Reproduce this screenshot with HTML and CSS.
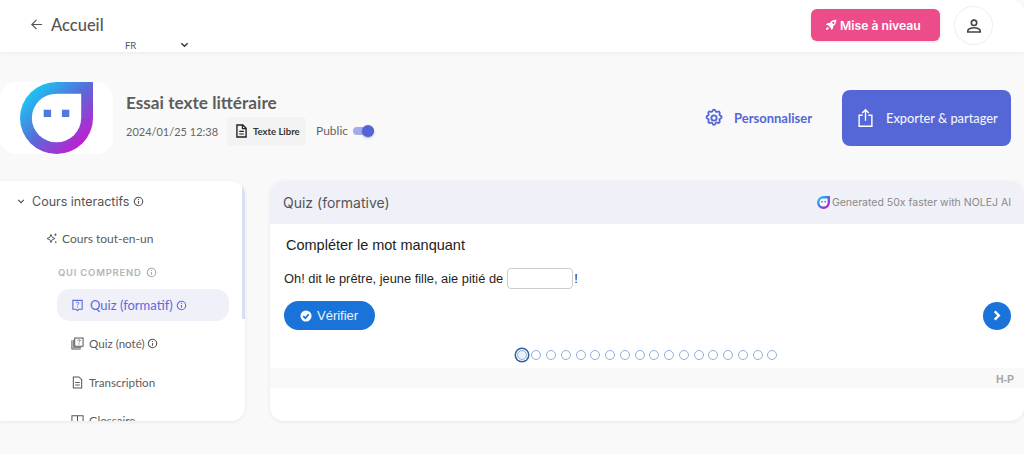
FILE: index.html
```html
<!DOCTYPE html>
<html lang="fr">
<head>
<meta charset="utf-8">
<title>Essai texte littéraire</title>
<link rel="stylesheet" href="styles.css">
</head>
<body>
<svg class="defs" width="0" height="0" aria-hidden="true">
  <defs>
    <linearGradient id="nolej" x1="0.1" y1="0.1" x2="0.9" y2="0.9">
      <stop offset="0" stop-color="#12d0f7"/>
      <stop offset="0.5" stop-color="#5a6ad8"/>
      <stop offset="1" stop-color="#cc14d0"/>
    </linearGradient>
    <linearGradient id="nolej2" x1="0.1" y1="0.1" x2="0.9" y2="0.9">
      <stop offset="0" stop-color="#12d0f7"/>
      <stop offset="0.5" stop-color="#5a6ad8"/>
      <stop offset="1" stop-color="#cc14d0"/>
    </linearGradient>
    <symbol id="info" viewBox="0 0 12 12">
      <circle cx="6" cy="6" r="4.600" fill="none" stroke="currentColor" stroke-width="1.200"/>
      <path d="M6 5.500v3M6 3.300v1.100" fill="none" stroke="currentColor" stroke-width="1.200"/>
    </symbol>
  </defs>
</svg>

<header class="topbar">
  <div class="topbar-left">
    <a class="back">
      <svg class="back-icon" viewBox="0 0 14 14"><path d="M13 7H2M7 2 2 7l5 5" fill="none" stroke="#555" stroke-width="1.300"/></svg>
      <span>Accueil</span>
    </a>
    <div class="lang">
      <span>FR</span>
      <svg class="lang-chevron" viewBox="0 0 10 6"><path d="M1.500 1 5 4.500 8.500 1" fill="none" stroke="#333" stroke-width="1.500"/></svg>
    </div>
  </div>
  <div class="topbar-right">
    <button class="upgrade">
      <svg class="rocket" viewBox="0 0 12 12"><path d="M11.300.7C8.600.6 6.300 1.700 4.800 3.900H2.600L.9 5.700l2.200.5L5.800 8.900l.5 2.200 1.800-1.700V7.200C10.300 5.700 11.400 3.400 11.300.7zM8.300 4.900a1.100 1.100 0 1 1 0-2.200 1.100 1.100 0 0 1 0 2.200zM2.500 8.100C1.500 8.600 1.100 9.900 1 11c1.100-.1 2.400-.5 2.900-1.500z" fill="#fff"/></svg>
      <span>Mise à niveau</span>
    </button>
    <div class="avatar">
      <svg class="avatar-icon" viewBox="0 0 16 16"><circle cx="8" cy="4.800" r="2.700" fill="none" stroke="#444" stroke-width="1.600"/><path d="M1.800 14v-1.200c0-2 4-3 6.200-3s6.200 1 6.200 3V14z" fill="none" stroke="#444" stroke-width="1.600"/></svg>
    </div>
  </div>
</header>

<section class="doc">
  <div class="doc-logo">
    <svg class="doc-logo-svg" viewBox="0 0 74 74" preserveAspectRatio="none">
      <path d="M74 0H37A37 37 0 1 0 74 37z" fill="url(#nolej)"/>
      <path d="M62 12H37A25 25 0 1 0 62 37z" fill="#fff"/>
      <rect x="24" y="28.500" width="7.500" height="7.500" fill="#4f7bdc"/>
      <rect x="42.500" y="28.500" width="7.500" height="7.500" fill="#4f7bdc"/>
    </svg>
  </div>
  <div class="doc-info">
    <h1 class="doc-title">Essai texte littéraire</h1>
    <div class="doc-meta">
      <span class="doc-date">2024/01/25 12:38</span>
      <span class="doc-type">
        <svg class="doc-type-icon" viewBox="0 0 12 15"><path d="M1 1h6.500L11 4.500V14H1z" fill="none" stroke="#222" stroke-width="1.500"/><path d="M7 1v4h4M3.500 8h5M3.500 10.800h5" fill="none" stroke="#222" stroke-width="1.300"/></svg>
        <span>Texte Libre</span>
      </span>
      <span class="doc-public">Public</span>
      <span class="toggle"><span class="toggle-knob"></span></span>
    </div>
  </div>
  <div class="doc-actions">
    <a class="customize">
      <svg class="gear" viewBox="0 0 24 24"><path d="M10.300 3.300c.4-1.700 3-1.700 3.400 0a1.700 1.700 0 0 0 2.600 1.100c1.500-.9 3.300.9 2.400 2.400a1.700 1.700 0 0 0 1.100 2.500c1.700.4 1.700 3 0 3.400a1.700 1.700 0 0 0-1.100 2.600c.9 1.500-.9 3.300-2.400 2.400a1.700 1.700 0 0 0-2.600 1.100c-.4 1.700-3 1.700-3.400 0a1.700 1.700 0 0 0-2.500-1.100c-1.500.9-3.300-.9-2.400-2.400a1.700 1.700 0 0 0-1.100-2.600c-1.700-.4-1.700-3 0-3.400a1.700 1.700 0 0 0 1.100-2.500c-.9-1.500.9-3.300 2.400-2.400a1.700 1.700 0 0 0 2.500-1.100z" fill="none" stroke="#5566d6" stroke-width="2.200"/><circle cx="12" cy="12" r="3.200" fill="none" stroke="#5566d6" stroke-width="2.200"/></svg>
      <span>Personnaliser</span>
    </a>
    <button class="export">
      <svg class="share" viewBox="0 0 16 20"><path d="M5 7H1.200v11.800h13.600V7H11M8 13V1.500M4.500 4.700 8 1.200l3.500 3.500" fill="none" stroke="#fff" stroke-width="1.500"/></svg>
      <span>Exporter &amp; partager</span>
    </button>
  </div>
</section>

<main class="workspace">
  <aside class="sidebar">
    <div class="side-scroll"></div>
    <div class="side-head">
      <svg class="side-chevron" viewBox="0 0 10 6"><path d="M1.500 1 5 4.500 8.500 1" fill="none" stroke="#444" stroke-width="1.300"/></svg>
      <span>Cours interactifs</span>
      <svg class="info info-dark"><use href="#info"/></svg>
    </div>
    <div class="side-all">
      <svg class="sparkle" viewBox="0 0 12 12"><path d="M5 2.500 6.200 5.300 9 6.500 6.200 7.700 5 10.500 3.800 7.700 1 6.500 3.800 5.300z" fill="none" stroke="#555" stroke-width="1"/><path d="M9.500 1l.5 1.200 1.200.5-1.200.5-.5 1.200-.5-1.200-1.200-.5 1.200-.5zM9.800 8.800l.4 1 1 .4-1 .4-.4 1-.4-1-1-.4 1-.4z" fill="#555"/></svg>
      <span>Cours tout-en-un</span>
    </div>
    <div class="side-label">
      <span>QUI COMPREND</span>
      <svg class="info info-grey"><use href="#info"/></svg>
    </div>
    <div class="side-item side-item-active">
      <svg class="side-icon" viewBox="0 0 14 14"><path d="M2 1.500h10v9.500H8.500L7 12.500 5.500 11H2z" fill="none" stroke="#5c6bdc" stroke-width="1.200"/><path d="M5.500 4.500C5.500 3 8.500 3 8.500 4.500 8.500 5.700 7 5.600 7 6.900M7 8v1.200" fill="none" stroke="#5c6bdc" stroke-width="1"/></svg>
      <span>Quiz (formatif)</span>
      <svg class="info info-active"><use href="#info"/></svg>
    </div>
    <div class="side-item">
      <svg class="side-icon" viewBox="0 0 14 14"><path d="M4 1h9v9H4z" fill="none" stroke="#555" stroke-width="1.100"/><path d="M1 3.500V13h9.500" fill="none" stroke="#555" stroke-width="1.100"/><path d="M2.700 3v8.300H11" fill="none" stroke="#555" stroke-width=".8"/><path d="M7 3.800c0-1 3-1 3 0 0 1-1.500 1-1.500 2.200M8.500 7v1" fill="none" stroke="#555" stroke-width=".9"/></svg>
      <span>Quiz (noté)</span>
      <svg class="info info-dark"><use href="#info"/></svg>
    </div>
    <div class="side-item">
      <svg class="side-icon" viewBox="0 0 14 14"><path d="M2.500 1h6l3 3v9h-9z" fill="none" stroke="#555" stroke-width="1.100"/><path d="M4.500 7h5M4.500 9.700h5" fill="none" stroke="#555" stroke-width="1"/></svg>
      <span>Transcription</span>
    </div>
    <div class="side-item">
      <svg class="side-icon" viewBox="0 0 14 14"><path d="M1 2h6v9H1zM7 2h6v9H7z" fill="none" stroke="#555" stroke-width="1.100"/></svg>
      <span>Glossaire</span>
    </div>
  </aside>

  <section class="panel">
    <div class="panel-head">
      <h2 class="panel-title">Quiz (formative)</h2>
      <div class="panel-credit">
        <svg class="credit-logo" viewBox="0 0 74 74">
          <path d="M74 0H37A37 37 0 1 0 74 37z" fill="url(#nolej2)"/>
          <path d="M60 14H37A23 23 0 1 0 60 37z" fill="#fff"/>
          <rect x="24" y="28" width="9" height="9" fill="#4f7bdc"/>
          <rect x="42" y="28" width="9" height="9" fill="#4f7bdc"/>
        </svg>
        <span>Generated 50x faster with NOLEJ AI</span>
      </div>
    </div>
    <div class="h5p">
      <h3 class="h5p-title">Compléter le mot manquant</h3>
      <p class="h5p-line">
        <span>Oh! dit le prêtre, jeune fille, aie pitié de</span>
        <input class="h5p-input" type="text" aria-label="mot manquant">
        <span>!</span>
      </p>
      <div class="h5p-controls">
        <button class="check">
          <svg class="check-icon" viewBox="0 0 14 14"><circle cx="7" cy="7" r="6.500" fill="#fff"/><path d="M3.800 7.200 6.200 9.500 10.200 5" fill="none" stroke="#1a73d9" stroke-width="2"/></svg>
          <span>Vérifier</span>
        </button>
        <button class="next" aria-label="Suivant">
          <svg class="next-icon" viewBox="0 0 10 12"><path d="M2.500 1.500 7 6l-4.500 4.500" fill="none" stroke="#fff" stroke-width="2.600"/></svg>
        </button>
      </div>
      <div class="dots">
        <span class="dot dot-current"></span>
        <span class="dot"></span><span class="dot"></span><span class="dot"></span>
        <span class="dot"></span><span class="dot"></span><span class="dot"></span>
        <span class="dot"></span><span class="dot"></span><span class="dot"></span>
        <span class="dot"></span><span class="dot"></span><span class="dot"></span>
        <span class="dot"></span><span class="dot"></span><span class="dot"></span>
        <span class="dot"></span><span class="dot"></span>
      </div>
      <div class="h5p-foot"><span class="h5p-mark">H-P</span></div>
    </div>
  </section>
</main>
</body>
</html>
```

FILE: styles.css
```css
* { box-sizing: border-box; }
html, body { margin: 0; height: 100%; }
body {
  width: 1024px;
  height: 454px;
  overflow: hidden;
  background: #f9f9f9;
  font-family: "Lato", sans-serif;
  color: #555;
  display: flex;
  flex-direction: column;
}
.defs { position: absolute; }
h1, h2, h3, p { margin: 0; font-weight: normal; }
button { font: inherit; border: 0; padding: 0; }

/* top bar */
.topbar {
  height: 52px;
  flex: none;
  background: #fff;
  border-top-right-radius: 12px;
  box-shadow: 0 1px 4px rgba(0, 0, 0, .06);
  display: flex;
  justify-content: space-between;
  padding: 8px 31px 0 30px;
}
.topbar-left { display: flex; flex-direction: column; }
.back { display: flex; align-items: center; gap: 8px; height: 33px; font-size: 16.500px; font-weight: 500; color: #555; }
.back-icon { width: 13px; height: 13px; }
.lang { display: flex; align-items: center; justify-content: space-between; width: 64px; margin: 0 0 0 95px; font-size: 9.500px; color: #555; height: 8px; }
.lang-chevron { width: 9px; height: 6px; }
.topbar-right { display: flex; align-items: flex-start; gap: 14px; margin-top: -2px; }
.upgrade {
  width: 129px;
  height: 32px;
  margin-top: 3px;
  border-radius: 6px;
  background: #ed4c8a;
  color: #fff;
  font-family: "Inter", sans-serif;
  font-weight: 600;
  font-size: 12.200px;
  display: flex;
  align-items: center;
  gap: 3px;
  padding-left: 14px;
  box-shadow: 0 1px 3px rgba(0, 0, 0, .12);
}
.rocket { width: 12px; height: 12px; }
.avatar {
  width: 39px;
  height: 39px;
  border-radius: 50%;
  border: 1px solid #eceef6;
  background: #fff;
  display: flex;
  align-items: center;
  justify-content: center;
}
.avatar-icon { width: 16px; height: 16px; }

/* document header */
.doc { display: flex; align-items: center; height: 129px; flex: none; padding-right: 13px; }
.doc-logo {
  width: 113px;
  height: 72px;
  margin-top: 2px;
  background: #fff;
  border-radius: 16px;
  display: flex;
  align-items: center;
  padding-left: 20px;
  flex: none;
}
.doc-logo-svg { width: 73px; height: 72px; display: block; }
.doc-info { margin-left: 13px; margin-top: 5px; }
.doc-title { font-size: 17.200px; font-weight: 700; color: #5c5c5c; line-height: 22px; margin-top: -1px; }
.doc-meta { display: flex; align-items: center; margin-top: 3px; font-size: 11px; color: #666; }
.doc-date { width: 101px; }
.doc-type {
  display: flex;
  align-items: center;
  gap: 6px;
  height: 29px;
  width: 79px;
  padding-left: 9px;
  background: #f3f3f3;
  border-radius: 4px;
  font-size: 9.500px;
  font-weight: 700;
  color: #333;
}
.doc-type-icon { width: 11px; height: 14px; }
.doc-public { margin-left: 10px; font-size: 12px; color: #666; position: relative; top: -1px; }
.toggle { position: relative; width: 21px; height: 8px; margin-left: 5px; border-radius: 4px; background: #a5abe8; }
.toggle-knob {
  position: absolute;
  right: 0;
  top: -2px;
  width: 12px;
  height: 12px;
  border-radius: 50%;
  background: #5464d8;
  box-shadow: 0 1px 2px rgba(0, 0, 0, .3);
}
.doc-actions { margin-left: auto; display: flex; align-items: center; gap: 30px; margin-top: 2px; }
.customize { display: flex; align-items: center; gap: 10px; color: #5566d6; font-size: 13px; font-weight: 700; }
.gear { width: 20px; height: 20px; }
.export {
  width: 169px;
  height: 56px;
  background: #5566d6;
  color: #f1f2fc;
  border-radius: 8px;
  font-family: "Lato", sans-serif;
  font-size: 12.800px;
  font-weight: 500;
  display: flex;
  align-items: center;
  gap: 13px;
  padding-left: 16px;
}
.share { width: 15px; height: 20px; }

/* workspace */
.workspace { display: flex; gap: 25px; flex: none; height: 240px; }
.sidebar {
  position: relative;
  width: 245px;
  height: 240px;
  overflow: hidden;
  background: #fff;
  border-radius: 0 14px 14px 0;
  box-shadow: 0 1px 4px rgba(0, 0, 0, .07);
  flex: none;
  padding-top: 12px;
}
.side-scroll { position: absolute; right: 0; top: 0; width: 3px; height: 138px; background: #d9e0ef; }
.side-head { display: flex; align-items: center; height: 16px; padding-left: 17px; font-size: 12.500px; font-family: "Inter", sans-serif; color: #555; }
.side-chevron { width: 8px; height: 5px; margin-right: 7px; }
.info { width: 11px; height: 11px; margin-left: 4px; flex: none; }
.info-dark { color: #555; }
.info-grey { color: #aaa; }
.info-active { color: #5c6bdc; margin-left: -3px; }
.side-all { display: flex; align-items: center; gap: 4px; margin-top: 21px; padding-left: 46px; height: 16px; font-size: 12px; color: #5c5c5c; }
.sparkle { width: 12px; height: 12px; }
.side-label { display: flex; align-items: center; margin-top: 19px; padding-left: 58px; height: 14px; font-size: 9.500px; font-weight: 600; letter-spacing: .75px; color: #b5b5b5; font-family: "Inter", sans-serif; }
.side-item { display: flex; align-items: center; gap: 5px; height: 32px; margin: 6.500px 16px 0 57px; padding-left: 14px; font-size: 11.600px; color: #5c5c5c; }
.side-item-active { background: #eff0f8; border-radius: 13px; color: #5c6bdc; font-size: 13px; margin-top: 10px; gap: 6px; }
.side-item .info-dark { margin-left: -3px; }
.side-icon { width: 13px; height: 13px; flex: none; }

/* panel */
.panel { flex: 1; height: 240px; background: #fff; border-radius: 14px; box-shadow: 0 1px 4px rgba(0, 0, 0, .07); overflow: hidden; display: flex; flex-direction: column; }
.panel-head { height: 43px; flex: none; background: #eff0f8; display: flex; align-items: center; justify-content: space-between; padding: 0 13px 0 13px; }
.panel-title { font-family: "Inter", sans-serif; font-size: 14px; color: #555; }
.panel-credit { display: flex; align-items: center; gap: 2px; font-family: "Inter", sans-serif; font-size: 10.500px; color: #8a8a8a; }
.credit-logo { width: 13px; height: 13px; }

/* H5P */
.h5p { flex: 1; font-family: "Liberation Sans", sans-serif; color: #1f1f1f; position: relative; }
.h5p-title { font-size: 14.500px; line-height: 18px; padding: 12px 0 0 16px; color: #222; }
.h5p-line { display: flex; align-items: center; padding-left: 14px; margin-top: 14px; font-size: 12.850px; height: 21px; }
.h5p-input { width: 66px; height: 21px; border: 1px solid #ccc; border-radius: 4px; background: #fff; margin: 0 1px 0 4px; padding: 0; }
.h5p-controls { display: flex; justify-content: space-between; align-items: center; padding: 0 13px 0 14px; margin-top: 12px; }
.check { width: 91px; height: 29px; border-radius: 15px; background: #1a73d9; color: #eaf3ff; font-family: "Liberation Sans", sans-serif; font-size: 13px; display: flex; align-items: center; gap: 5px; padding-left: 16px; }
.check-icon { width: 12px; height: 12px; }
.next { width: 28px; height: 28px; border-radius: 50%; background: #1a73d9; display: flex; align-items: center; justify-content: center; }
.next-icon { width: 10px; height: 11px; }
.dots { display: flex; align-items: center; gap: 4.750px; padding-left: 246.500px; margin-top: 17px; height: 16px; }
.dot { width: 10px; height: 10px; border-radius: 50%; border: 1px solid #8fb0da; background: #fff; flex: none; }
.dot-current { box-shadow: 0 0 0 1px #fff, 0 0 0 2.500px #2f5f98; background: #eaf1fa; }
.h5p-foot { height: 20px; margin-top: 5px; background: #f9f9f9; display: flex; align-items: center; justify-content: flex-end; padding-right: 10px; padding-top: 2px; }
.h5p-mark { font-size: 10.500px; font-weight: 700; color: #a5a5a5; line-height: 14px; }
```
